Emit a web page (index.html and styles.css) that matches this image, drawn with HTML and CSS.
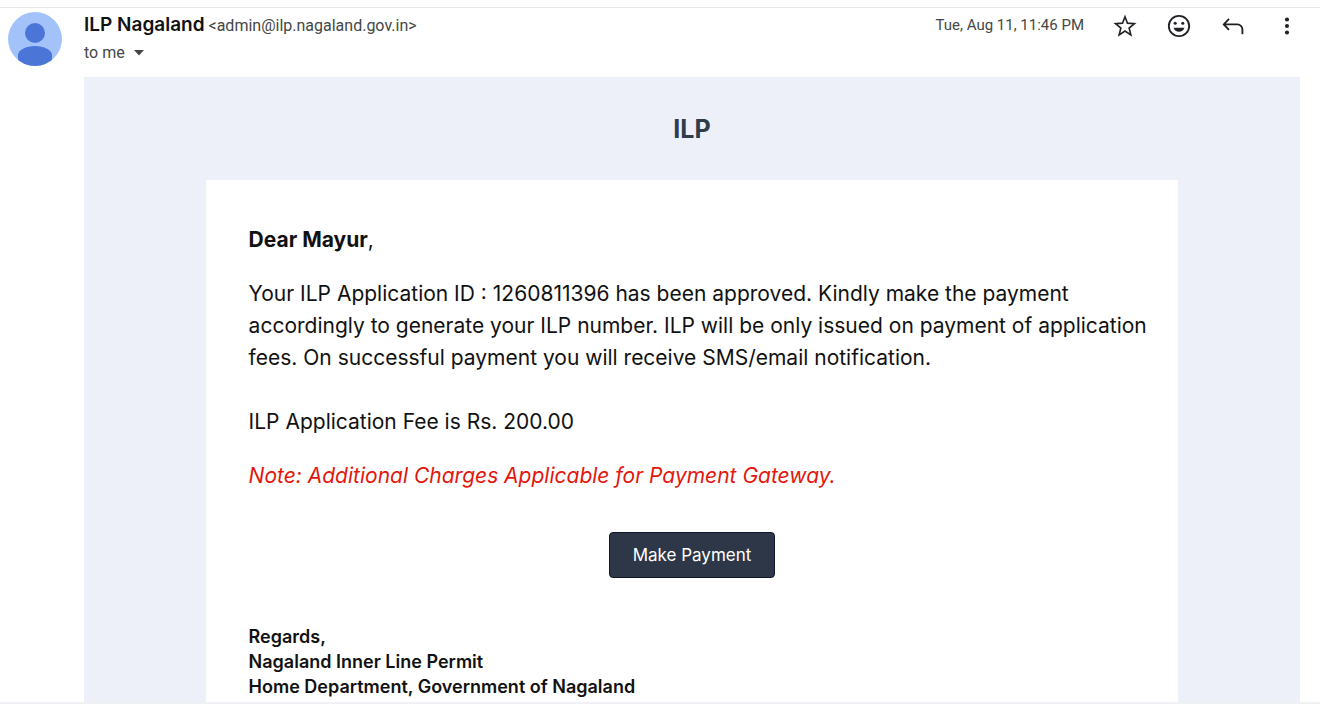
FILE: index.html
```html
<!DOCTYPE html>
<html lang="en">
<head>
    <meta charset="UTF-8">
    <meta name="viewport" content="width=device-width, initial-scale=1.0">
    <title>ILP Nagaland</title>
    <link rel="stylesheet" href="styles.css">
</head>
<body>

    <article class="mail">
        <header class="mail-header">
            <svg class="avatar" viewBox="0 0 54 54" aria-hidden="true">
                <defs>
                    <clipPath id="avatarClip"><circle cx="27" cy="27" r="27"/></clipPath>
                </defs>
                <g clip-path="url(#avatarClip)">
                    <rect width="54" height="54" fill="#a3c2f9"/>
                    <circle cx="27" cy="21" r="10" fill="#4c75d8"/>
                    <path d="M10 54V43c0-5 8-9 17-9s17 4 17 9v11z" fill="#4c75d8"/>
                </g>
            </svg>
            <div class="sender">
                <div class="from"><span class="name">ILP Nagaland</span> <span class="address">&lt;admin@ilp.nagaland.gov.in&gt;</span></div>
                <button class="recipients" type="button">to me
                    <svg width="10" height="6" viewBox="0 0 10 6" aria-hidden="true"><path d="M0 0h10L5 5.5z" fill="currentColor"/></svg>
                </button>
            </div>
            <div class="actions">
                <time class="date">Tue, Aug 11, 11:46 PM</time>
                <button class="icon" type="button" aria-label="Star">
                    <svg viewBox="0 0 24 24"><path d="M12 3.4l2.3 6 6.400.400-4.900 4.100 1.600 6.300-5.400-3.500-5.400 3.500 1.600-6.300-4.900-4.100 6.400-.400z" fill="none" stroke="currentColor" stroke-width="1.5"/></svg>
                </button>
                <button class="icon" type="button" aria-label="Add reaction">
                    <svg viewBox="0 0 24 24">
                        <circle cx="12" cy="12" r="9.400" fill="none" stroke="currentColor" stroke-width="1.7"/>
                        <circle cx="8.500" cy="9.500" r="1.400" fill="currentColor"/>
                        <circle cx="15.500" cy="9.500" r="1.400" fill="currentColor"/>
                        <path d="M7 13.700h10c-.7 2.300-2.600 3.700-5 3.700s-4.300-1.400-5-3.700z" fill="currentColor"/>
                    </svg>
                </button>
                <button class="icon" type="button" aria-label="Reply">
                    <svg viewBox="0 0 24 24"><path d="M8.300 5.500L3.500 10.500l4.800 5M3.500 10.500h12.500a4.700 4.700 0 0 1 4.700 4.700V19.500" fill="none" stroke="currentColor" stroke-width="1.700"/></svg>
                </button>
                <button class="icon" type="button" aria-label="More">
                    <svg viewBox="0 0 24 24" fill="currentColor">
                        <circle cx="12" cy="6" r="1.900"/>
                        <circle cx="12" cy="12" r="1.900"/>
                        <circle cx="12" cy="18" r="1.900"/>
                    </svg>
                </button>
            </div>
        </header>

        <div class="mail-body">
            <h1>ILP</h1>
            <div class="card">
                <p><strong>Dear Mayur</strong>,</p>
                <p>
                    Your ILP Application ID : 1260811396 has been approved. Kindly make the payment
                    accordingly to generate your ILP number. ILP will be only issued on payment of application
                    fees. On successful payment you will receive SMS/email notification.
                    <br><br>
                    ILP Application Fee is Rs. 200.00
                </p>
                <p class="note">Note: Additional Charges Applicable for Payment Gateway.</p>
                <a class="pay" href="#">Make Payment</a>
                <div class="regards">
                    Regards,<br>
                    Nagaland Inner Line Permit<br>
                    Home Department, Government of Nagaland
                </div>
            </div>
        </div>
    </article>

</body>
</html>
```

FILE: styles.css
```css
* {
    box-sizing: border-box;
}
body {
    margin: 0;
    background-color: #fff;
    color: #111;
    font-family: Inter, "Liberation Sans", sans-serif;
}
button {
    padding: 0;
    border: none;
    background: none;
    color: inherit;
    font: inherit;
    cursor: pointer;
}
.mail {
    margin: 7px 6px 0 0;
    border-top: 1px solid #e6e8ea;
    border-bottom: 2px solid #f0f1f4;
}
.mail-header {
    display: flex;
    align-items: flex-start;
    padding: 4px 20px 11px 8px;
    color: #444746;
    font-family: Roboto, "Liberation Sans", sans-serif;
    font-size: 16px;
}
.avatar {
    width: 54px;
    height: 54px;
    flex: none;
    margin-bottom: -1px;
}
.sender {
    flex: 1;
    margin-left: 22px;
}
.from {
    line-height: 26px;
}
.name {
    color: #111;
    font-family: Inter, "Liberation Sans", sans-serif;
    font-size: 19px;
    font-weight: 600;
}
.recipients {
    display: flex;
    align-items: center;
    gap: 9px;
    line-height: 27px;
}
.actions {
    display: flex;
    align-items: center;
    gap: 28px;
    line-height: 27px;
}
.date {
    font-size: 15px;
}
.icon {
    width: 26px;
    height: 27px;
    color: #202124;
}
.icon svg {
    display: block;
    width: 26px;
    height: 26px;
}
.mail-body {
    margin: 0 20px 0 84px;
    background-color: #edf0f9;
}
h1 {
    margin: 0;
    padding: 36px 0 35px;
    color: #2f3d4b;
    font-size: 25px;
    font-weight: 700;
    line-height: 32px;
    text-align: center;
}
.card {
    width: 80%;
    margin: 0 auto;
    padding: 44px 30px 3px;
    background-color: #fff;
    font-size: 21px;
    line-height: 32px;
}
p {
    margin: 0 0 22px 13px;
}
strong {
    font-weight: 700;
}
.note {
    margin-bottom: 40px;
    color: #e3170d;
    font-style: italic;
}
.pay {
    display: block;
    width: fit-content;
    margin: 0 auto;
    padding: 10px 23px;
    border: 1px solid #111827;
    border-radius: 4px;
    background-color: #2d3748;
    color: #fff;
    font-size: 17px;
    line-height: 24px;
    text-decoration: none;
}
.regards {
    margin: 46px 0 0 13px;
    font-size: 18px;
    font-weight: 600;
    line-height: 25px;
}
```
